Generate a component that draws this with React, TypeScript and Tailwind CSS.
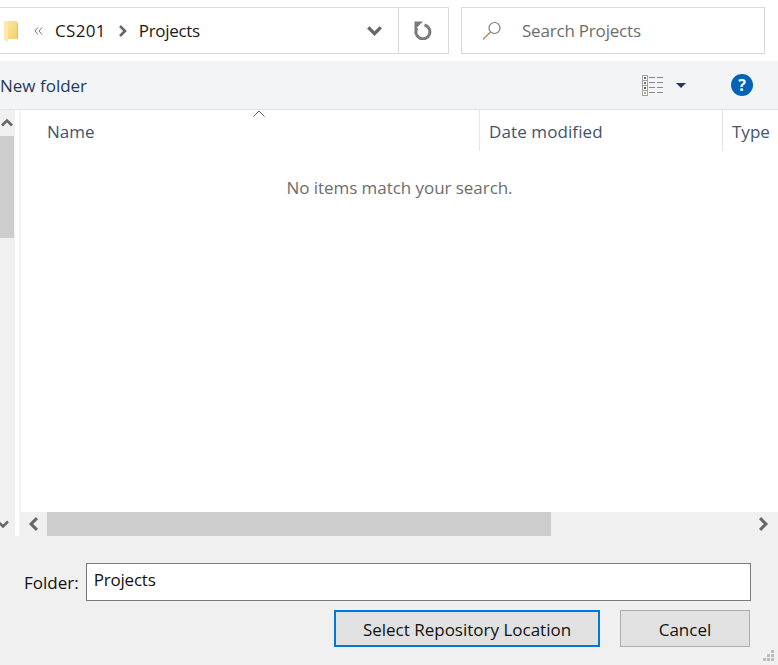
import React from "react";

const font = "font-['Open_Sans','Noto_Sans',sans-serif]";

const ViewIcon = () => (
  <svg width="22" height="21" viewBox="0 0 22 21" fill="none">
    <rect x="0.500" y="0.500" width="5" height="20" fill="#fff" stroke="#a0a0a0" />
    <path d="M1 5.500h4M1 10.500h4M1 15.500h4" stroke="#a0a0a0" />
    <rect x="2" y="2" width="2" height="2" fill="#3a7a8c" />
    <rect x="2" y="7" width="2" height="2" fill="#6b7f4a" />
    <rect x="2" y="12" width="2" height="2" fill="#c8321e" />
    <rect x="2" y="17" width="2" height="2" fill="#b9b26a" />
    <path d="M7 2.500h6M15 2.500h6M7 7.500h6M15 7.500h6M7 12.500h6M15 12.500h6M7 17.500h6M15 17.500h6" stroke="#8a8a8a" />
  </svg>
);

const FolderIcon = () => (
  <svg width="14" height="21" viewBox="0 0 14 21">
    <defs>
      <linearGradient id="folderBody" x1="0" y1="0" x2="1" y2="1">
        <stop offset="0" stopColor="#fbe7a1" />
        <stop offset="1" stopColor="#f3cf66" />
      </linearGradient>
    </defs>
    <path d="M3 0h10v18H3z" fill="url(#folderBody)" />
    <path d="M13 2h1v16h-1z" fill="#e9c25a" />
    <path d="M0 0h4v21l-4-2z" fill="#fbe9ae" />
  </svg>
);

const SearchIcon = () => (
  <svg width="20" height="20" viewBox="0 0 20 20" fill="none" stroke="#7a7a7a">
    <circle cx="12.500" cy="7" r="5.500" strokeWidth="1.200" />
    <path d="M8.500 11 1 18.500" stroke="#a8825a" strokeWidth="1.300" />
  </svg>
);

const RefreshIcon = () => (
  <svg width="19" height="19" viewBox="0 0 19 19" fill="none">
    <path d="M10.500 4A7 7 0 1 1 3 7" stroke="#7a7a7a" strokeWidth="3" />
    <path d="M0.500 0.500h8.500l-8.500 8.500z" fill="#7a7a7a" />
  </svg>
);

const Chevron = ({ d, w = 12, h = 12 }: { d: string; w?: number; h?: number }) => (
  <svg width={w} height={h} viewBox="0 0 12 12" fill="none" stroke="#666" strokeWidth="2.600">
    <path d={d} />
  </svg>
);

const App = () => {
  return (
    <div className={`${font} w-[778px] h-[665px] bg-white overflow-hidden flex flex-col text-[17px] leading-none`}>
      {/* Address bar */}
      <div className="h-[61px] shrink-0 pt-[7px] flex items-start">
        <div className="w-[449px] h-[47px] border-y border-r border-[#d9d9d9] flex items-center">
          <div className="ml-[4px] mt-[2px]"><FolderIcon /></div>
          <svg className="ml-[16px]" width="9" height="8" viewBox="0 0 9 8" fill="none" stroke="#777" strokeWidth="1">
            <path d="M4 0.500 1 4l3 3.500M8 0.500 5 4l3 3.500" />
          </svg>
          <span className="ml-[12px] text-[#1a1a1a] tracking-[0.3px]">CS201</span>
          <div className="ml-[11px]"><Chevron d="M3 1l5 5-5 5" /></div>
          <span className="ml-[10px] text-[#1a1a1a] tracking-[-0.3px]">Projects</span>
          <div className="ml-auto mr-[16px]"><Chevron d="M1 3.500l5 5 5-5" w={15} h={15} /></div>
          <div className="w-[50px] h-full border-l border-[#d9d9d9] flex items-center justify-center">
            <RefreshIcon />
          </div>
        </div>
        <div className="ml-[12px] w-[304px] h-[47px] border border-[#d9d9d9] flex items-center">
          <div className="ml-[20px]"><SearchIcon /></div>
          <span className="ml-[20px] text-[#6d6d6d] tracking-[-0.2px]">Search Projects</span>
        </div>
      </div>

      {/* Toolbar */}
      <div className="h-[49px] shrink-0 bg-[#f3f4f6] border-b border-[#e4e4e4] flex items-center text-[#1f3a5a]">
        <span>New folder</span>
        <div className="ml-auto flex items-center">
          <ViewIcon />
          <div className="ml-[12px] w-0 h-0 border-x-[5px] border-x-transparent border-t-[5px] border-t-[#1f3a5a]" />
          <div className="ml-[45px] mr-[25px] w-[22px] h-[22px] rounded-full bg-[#0063b8] text-white font-bold text-[16px] flex items-center justify-center">?</div>
        </div>
      </div>

      {/* File list */}
      <div className="flex-1 min-h-0 flex">
        <div className="w-[15px] shrink-0 bg-[#f0f0f0] flex flex-col overflow-hidden">
          <div className="h-[26px] flex items-center justify-center pr-[2px]">
            <Chevron d="M1 8.500l5-5 5 5" />
          </div>
          <div className="h-[102px] bg-[#cdcdcd] mr-[1px]" />
          <div className="flex-1" />
          <div className="h-[24px] flex items-center -ml-[3px]">
            <Chevron d="M1 3.500l5 5 5-5" />
          </div>
        </div>
        <div className="w-[4px] shrink-0 bg-white" />
        <div className="w-[2px] shrink-0 bg-[#f3f3f3]" />
        <div className="flex-1 min-w-0 flex flex-col">
          <div className="flex-1 min-h-0 flex flex-col relative">
            <svg className="absolute left-[232px] top-0" width="12" height="7" viewBox="0 0 12 7" fill="none" stroke="#666" strokeWidth="1">
              <path d="M0.500 6.500 6 1l5.500 5.500" />
            </svg>
            <div className="h-[41px] shrink-0 flex text-[#43536b]">
              <div className="w-[459px] border-r border-[#e4e4e4] pl-[26px] pt-[13px]">Name</div>
              <div className="w-[243px] border-r border-[#e4e4e4] pl-[9px] pt-[13px] tracking-[0.1px]">Date modified</div>
              <div className="pl-[9px] pt-[13px]">Type</div>
            </div>
            <div className="flex-1 pt-[28px] text-center text-[#6d6d6d] tracking-[-0.05px]">No items match your search.</div>
          </div>

          {/* Horizontal scrollbar */}
          <div className="h-[24px] shrink-0 bg-[#f0f0f0] flex items-center">
            <div className="w-[26px] flex justify-center">
              <Chevron d="M8.500 1l-5 5 5 5" w={14} h={14} />
            </div>
            <div className="w-[504px] h-full bg-[#cdcdcd]" />
            <div className="ml-auto w-[30px] flex justify-center">
              <Chevron d="M3.500 1l5 5-5 5" w={14} h={14} />
            </div>
          </div>
        </div>
      </div>

      {/* Footer */}
      <div className="h-[129px] shrink-0 bg-[#f0f0f0] relative flex flex-col">
        <div className="mt-[27px] ml-[24px] flex items-center">
          <span className="text-[#111]">Folder:</span>
          <div className="ml-[7px] w-[665px] h-[38px] bg-white border border-[#7a7a7a] pl-[7px] pt-[7px] text-[#111] tracking-[-0.2px]">Projects</div>
        </div>
        <div className="mt-[9px] ml-[334px] flex">
          <button className="w-[266px] h-[37px] pt-[2px] bg-[#e1e1e1] border-2 border-[#0078d7] text-[#111]">Select Repository Location</button>
          <button className="ml-[20px] w-[130px] h-[37px] pt-[2px] bg-[#e1e1e1] border border-[#adadad] text-[#111]">Cancel</button>
        </div>
        <svg className="absolute right-[4px] bottom-[4px]" width="11" height="11" viewBox="0 0 11 11" fill="#bdbdbd">
          <rect x="8" y="0" width="3" height="3" />
          <rect x="4" y="4" width="3" height="3" />
          <rect x="8" y="4" width="3" height="3" />
          <rect x="0" y="8" width="3" height="3" />
          <rect x="4" y="8" width="3" height="3" />
          <rect x="8" y="8" width="3" height="3" />
        </svg>
      </div>
    </div>
  );
};

export default App;
